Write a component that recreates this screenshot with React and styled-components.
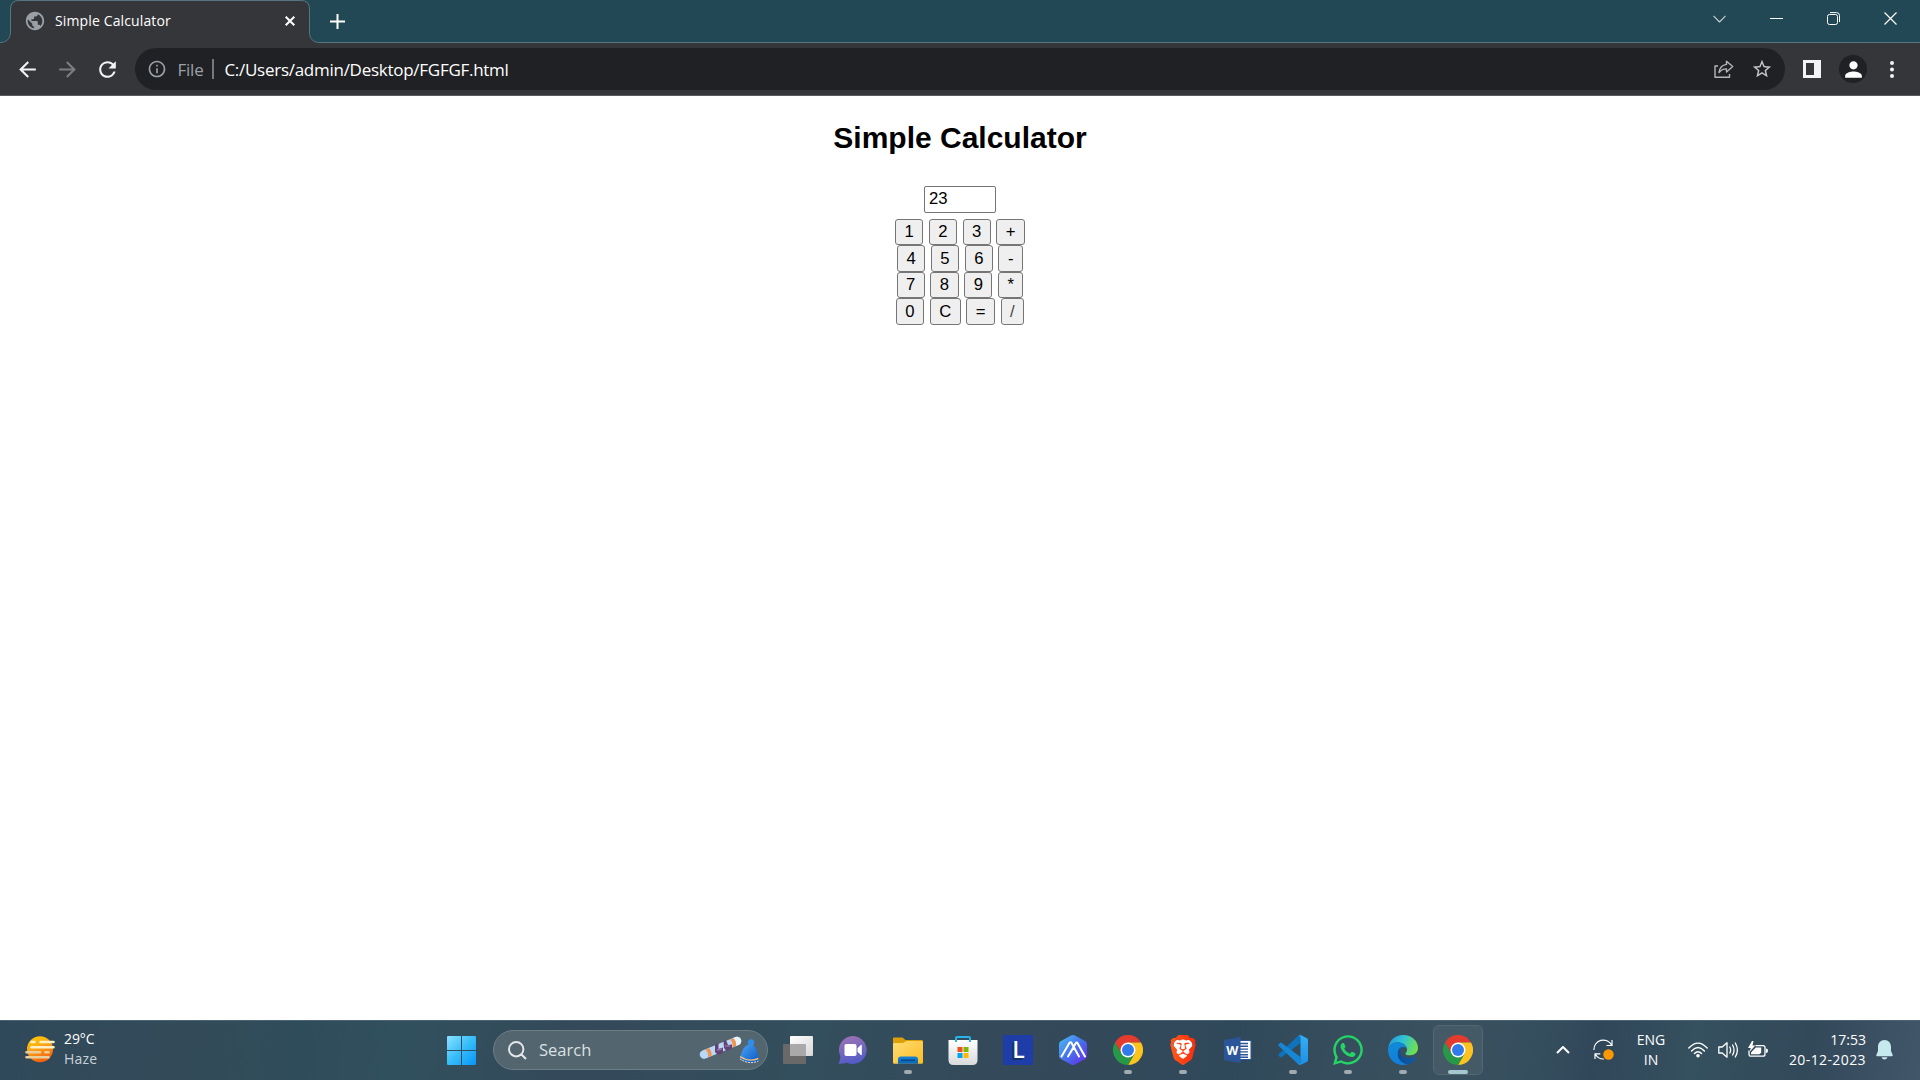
import React from "react";
import styled, { createGlobalStyle } from "styled-components";
import { MdPublic, MdArrowBack, MdArrowForward, MdRefresh, MdInfoOutline, MdStarBorder, MdPerson } from "react-icons/md";
import { FaWhatsapp } from "react-icons/fa";
import { SiBrave } from "react-icons/si";

const Global = createGlobalStyle`
  * { box-sizing: border-box; }
  body { margin: 0; background: #fff; overflow: hidden; }
  svg { display: block; flex: none; }
`;

const ui = `"Open Sans", "Noto Sans", sans-serif`;

const Screen = styled.div`
  width: 1920px;
  height: 1080px;
  display: flex;
  flex-direction: column;
  background: #fff;
  font-family: ${ui};
`;

/* ---------- browser ---------- */
const TabStrip = styled.header`
  height: 43px;
  flex: none;
  display: flex;
  background: #224855;
  box-shadow: inset 0 -1px #557680;
`;

const TabShape = styled.div`
  position: relative;
  width: 320px;
  height: 43px;
  flex: none;
  > svg { position: absolute; left: 0; top: 0; }
`;

const TabContent = styled.div`
  position: relative;
  height: 42px;
  display: flex;
  align-items: center;
  padding: 0 25px 0 24px;
  color: #f1f3f4;
`;

const Label = styled.span`
  font-size: ${(p) => p.$size || 14}px;
  letter-spacing: ${(p) => p.$track || 0}px;
  color: ${(p) => p.$color || "#fff"};
  line-height: 20px;
  white-space: nowrap;
`;

const TabTitle = styled(Label)`
  margin-left: 9px;
  flex: 1;
`;

const NewTab = styled.div`
  width: 74px;
  padding: 14px 0 0 10px;
`;

const WindowControls = styled.div`
  margin-left: auto;
  display: flex;
  height: 37px;
  align-items: center;
  padding-right: 1px;
`;

const ControlSlot = styled.div`
  width: 57px;
  display: flex;
  justify-content: center;
`;

const Toolbar = styled.div`
  height: 53px;
  flex: none;
  display: flex;
  align-items: center;
  background: #35363a;
  border-bottom: 1px solid #5a5b5f;
  padding: 0 0 0 15px;
`;

const NavIcon = styled.div`
  width: 25px;
  flex: none;
  margin-right: ${(p) => p.$gap}px;
  color: ${(p) => (p.$dim ? "#7d7e81" : "#f1f3f4")};
`;

const Omnibox = styled.div`
  width: 1650px;
  height: 42px;
  flex: none;
  border-radius: 21px;
  background: #202124;
  display: flex;
  align-items: center;
  padding: 0 12px 0 12.4px;
  color: #9aa0a6;
`;

const UrlText = styled(Label)`
  padding-top: 1px;
`;

const Scheme = styled(UrlText)`
  width: 27px;
  margin-left: 10px;
`;

const Divider = styled.i`
  width: 2px;
  height: 20px;
  margin: 0 10px 0 8px;
  background: #75787c;
`;

const OmniActions = styled.div`
  margin-left: auto;
  display: flex;
  align-items: center;
  gap: 17px;
  color: #c4c7c9;
`;

const ToolbarEnd = styled.div`
  display: flex;
  align-items: center;
  padding-left: 18px;
`;

const Avatar = styled.div`
  width: 28px;
  height: 28px;
  margin: 0 23px 0 18px;
  border-radius: 50%;
  background: #202124;
  color: #fff;
  display: flex;
  align-items: center;
  justify-content: center;
`;

/* ---------- page ---------- */
const Page = styled.main`
  flex: 1;
  display: flex;
  flex-direction: column;
  align-items: center;
  font-family: "Liberation Sans", Arial, sans-serif;
  color: #000;
`;

const Title = styled.h2`
  margin: 25px 0 31px;
  font-size: 30px;
  line-height: 34px;
`;

const Display = styled.input`
  width: 72px;
  height: 27px;
  margin: 0 0 6px;
  padding: 0 4px 2px;
  border: 1px solid #767676;
  border-radius: 2px;
  outline: none;
  font: 16.667px "Liberation Sans", Arial, sans-serif;
  color: #000;
`;

const KeyRow = styled.div`
  display: flex;
  gap: 5.56px;
  height: ${(p) => (p.$tall ? 27 : 26)}px;
  > button { padding-bottom: ${(p) => (p.$tall ? 0 : 1)}px; }
`;

const Key = styled.button`
  height: 100%;
  padding: 0 8.5px;
  border: 1px solid #767676;
  border-radius: 3px;
  background: #efefef;
  font: 16.667px "Liberation Sans", Arial, sans-serif;
  color: ${(p) => (p.$faded ? "#444" : "#000")};
`;

/* ---------- taskbar ---------- */
const Taskbar = styled.footer`
  height: 60px;
  flex: none;
  display: flex;
  align-items: center;
  border-top: 1px solid #4b6470;
  padding-bottom: 1px;
  background: linear-gradient(100deg, #30495a 0%, #334b59 10%, #2f4c5a 16%, #31505e 21%, #34495a 30%, #334e5c 42%, #34495a 53%, #30495a 64%, #3a515f 75%, #354e5d 80%, #30475a 83%, #35505f 88%, #32495a 94%, #42566a 100%);
`;

const Weather = styled.div`
  width: 446px;
  flex: none;
  display: flex;
  align-items: center;
  padding: 0 0 2px 25px;
  gap: 9px;
`;

const Stack = styled.div`
  display: flex;
  flex-direction: column;
  align-items: ${(p) => p.$align || "flex-start"};
`;

const SearchBox = styled.div`
  width: 275px;
  height: 40px;
  flex: none;
  margin: 0 2px 0 17px;
  padding: 0 7px 0 14px;
  border: 1px solid #6b7e87;
  border-radius: 20px;
  background: #53656f;
  display: flex;
  align-items: center;
  gap: 12px;
  > :last-child { margin-left: auto; }
`;

const AppSlot = styled.div`
  position: relative;
  width: 55px;
  height: 60px;
  flex: none;
  display: flex;
  align-items: center;
  justify-content: center;
`;

const ActiveTile = styled.div`
  width: 50px;
  height: 50px;
  border: 1px solid #536872;
  border-radius: 6px;
  background: #455a67;
  display: flex;
  align-items: center;
  justify-content: center;
`;

const RunMark = styled.i`
  position: absolute;
  bottom: 6px;
  left: 50%;
  width: ${(p) => (p.$active ? 20 : 8)}px;
  height: 4px;
  transform: translateX(-50%);
  border-radius: 2px;
  background: ${(p) => (p.$active ? "#a5c8d0" : "#a0abb2")};
`;

const Tray = styled.div`
  margin-left: auto;
  display: flex;
  align-items: center;
  padding: 0 27px 1px 0;
`;

const TrayItem = styled.div`
  flex: none;
  margin-right: ${(p) => p.$gap || 0}px;
  width: ${(p) => (p.$w ? `${p.$w}px` : "auto")};
`;

/* ---------- drawings ---------- */
const TabOutline = () => (
  <svg width="320" height="43" viewBox="0 0 320 43">
    <path d="M0 43V42.5C6 42.5 10.5 39 10.5 32V9Q10.5.5 19 .5H301Q309.5 .5 309.5 9V32C309.5 39 313 42.5 320 42.5V43Z" fill="#35363a" />
    <path d="M0 42.5C6 42.5 10.5 39 10.5 32V9Q10.5.5 19 .5H301Q309.5 .5 309.5 9V32C309.5 39 313 42.5 320 42.5" fill="none" stroke="#557680" />
  </svg>
);

const Line = ({ w, h, d, sw = 1.2, color = "#fff", cap = "butt" }) => (
  <svg width={w} height={h} viewBox={`0 0 ${w} ${h}`} fill="none" stroke={color} strokeWidth={sw} strokeLinecap={cap} strokeLinejoin="round">
    <path d={d} />
  </svg>
);

const SidePanel = () => (
  <svg width="18" height="18" viewBox="0 0 18 18">
    <path d="M0 0H18V18H0ZM3 3V15H11V3Z" fill="#f1f3f4" fillRule="evenodd" />
  </svg>
);

const MenuDots = () => (
  <svg width="4" height="17" viewBox="0 0 4 17" fill="#f1f3f4">
    <circle cx="2" cy="2" r="2" /><circle cx="2" cy="8.5" r="2" /><circle cx="2" cy="15" r="2" />
  </svg>
);

const Haze = () => (
  <svg width="30" height="27" viewBox="0 0 30 27">
    <defs>
      <linearGradient id="sun" x1="0" y1="0" x2=".4" y2="1"><stop stopColor="#ffd000" /><stop offset=".5" stopColor="#fba715" /><stop offset="1" stopColor="#f4640d" /></linearGradient>
    </defs>
    <circle cx="15" cy="13.3" r="13" fill="url(#sun)" />
    <g stroke="#fdf0c4" strokeWidth="2.6" strokeLinecap="round">
      <path d="M6.5 6H9.5M15.5 6H28.5M6.5 11.2H28.5" />
      <path d="M1.5 16.3H15M20.5 16.3H23.5M1.5 21.3H23.5" stroke="#e8cf9c" />
    </g>
  </svg>
);

const Windows = () => (
  <svg width="30" height="30" viewBox="0 0 30 30">
    <defs>
      <linearGradient id="win" x1="0" y1="0" x2="1" y2="1"><stop stopColor="#8be2ff" /><stop offset=".5" stopColor="#36bdf9" /><stop offset="1" stopColor="#0795f7" /></linearGradient>
    </defs>
    <path transform="translate(0 1)" d="M2 0H15V14H1V1Q1 0 2 0ZM16 0H29Q30 0 30 1V14H16ZM1 15H15V29H2Q1 29 1 28ZM16 15H30V28Q30 29 29 29H16Z" fill="url(#win)" />
  </svg>
);

const Snow = () => (
  <svg width="62" height="28" viewBox="0 0 62 28">
    <defs>
      <linearGradient id="hat" x1="0" y1="0" x2="1" y2="1"><stop stopColor="#4aa5f5" /><stop offset="1" stopColor="#0a57c3" /></linearGradient>
    </defs>
    <path d="M6 18.5L39 5" stroke="#b9d7f6" strokeWidth="8.5" strokeLinecap="round" />
    <path d="M37.5 5.6L39 5" stroke="#e7f3ff" strokeWidth="8.5" strokeLinecap="round" />
    <path d="M7.5 13.4Q10.5 16 10 21.3L13.5 19.8Q14 15.4 11 12ZM32 3.5Q35 6.5 34.6 11.4L38 10Q38.8 5.5 35.5 2.2Z" fill="#f0944f" />
    <path d="M17 8.5L20.5 7V13L25 11.5V17L20 19L17 16ZM25.5 5L28 4L30 9L34 8.5V12.5L28.5 15L26 12Z" fill="#654275" />
    <path d="M19 14L24 13M27 10L32 10" stroke="#9273ac" strokeWidth="1.5" />
    <circle cx="53" cy="6.5" r="3.2" fill="#2e8eea" />
    <path d="M42 23C43 14 47 8.5 52.5 8.5C57.5 8.5 60 15 60.5 25Q51 29 42 23Z" fill="url(#hat)" />
    <path d="M42 20.5Q51 26.5 60.3 22.5" stroke="#f5bd76" strokeWidth="1.4" fill="none" />
    <path d="M41.8 23Q51 29 60.4 25" stroke="#efe3cf" strokeWidth="1" fill="none" strokeDasharray="2 1" />
  </svg>
);

const TaskView = () => (
  <svg width="30" height="28" viewBox="0 0 30 28">
    <defs><linearGradient id="tv" x1="0" y1="0" x2="1" y2="1"><stop stopColor="#fff" /><stop offset="1" stopColor="#d7d7d7" /></linearGradient></defs>
    <rect x="0" y="8" width="23" height="20" rx="1" fill="#696969" />
    <rect x="7" y="0" width="23" height="20" rx="1" fill="url(#tv)" />
    <path d="M7 8H22Q23 8 23 9V20H8Q7 20 7 19Z" fill="#a9a9a9" />
  </svg>
);

const Chat = () => (
  <svg width="30" height="30" viewBox="0 0 30 30">
    <defs><linearGradient id="chat" x1=".3" y1="0" x2=".6" y2="1"><stop stopColor="#9c72b6" /><stop offset=".5" stopColor="#7568bc" /><stop offset="1" stopColor="#5059c9" /></linearGradient></defs>
    <path d="M15 1A14 14 0 1 1 9 27.8Q5 29 1.3 28.8Q.3 28.5 1 27.5Q2.5 25 2.3 21A14 14 0 0 1 15 1Z" fill="url(#chat)" />
    <rect x="6.5" y="9" width="12" height="12" rx="1.8" fill="#fff" />
    <path d="M19.5 13.2L22.8 10Q23.8 9.5 23.8 10.6V19.4Q23.8 20.5 22.8 20L19.5 16.8Z" fill="#fff" />
  </svg>
);

const Folder = () => (
  <svg width="30" height="27" viewBox="0 0 30 27">
    <defs>
      <linearGradient id="fo" x1="0" y1="0" x2="1" y2="1"><stop stopColor="#ffdc75" /><stop offset="1" stopColor="#fcbd22" /></linearGradient>
      <linearGradient id="fb" x1="0" y1="0" x2="0" y2="1"><stop stopColor="#1684d8" /><stop offset="1" stopColor="#0863b1" /></linearGradient>
    </defs>
    <path d="M0 1.5Q0 .5 1 .5H9.5L12.5 3H29Q30 3 30 4.5V10H0Z" fill="#dea006" />
    <path d="M0 7Q0 6 1 6H10L13.5 4H28.5Q30 4 30 5.5V25.5Q30 26.8 28.7 26.8H1.3Q0 26.8 0 25.5Z" fill="url(#fo)" />
    <path d="M5 26.8V22.5Q5 19.5 8 19.5H22Q25 19.5 25 22.5V26.8Z" fill="url(#fb)" />
    <path d="M8 23.2H22" stroke="#07427d" strokeWidth="1.3" />
  </svg>
);

const Store = () => (
  <svg width="30" height="30" viewBox="0 0 30 30">
    <defs><linearGradient id="st" x1="0" y1="0" x2="0" y2="1"><stop stopColor="#fff" /><stop offset="1" stopColor="#d9dadb" /></linearGradient></defs>
    <path d="M8 7V3Q8 2 9 2H21Q22 2 22 3V7" fill="none" stroke="#28b4e8" strokeWidth="2" />
    <path d="M.5 5H29.5V25Q29.5 30 24.5 30H5.5Q.5 30 .5 25Z" fill="url(#st)" />
    <path d="M8 5V7M22 5V7" stroke="#28b4e8" strokeWidth="2" />
    <path d="M9.5 12H14.5V17H9.5Z" fill="#f25022" /><path d="M15.5 12H20.5V17H15.5Z" fill="#7fba00" />
    <path d="M9.5 18H14.5V23H9.5Z" fill="#00a4ef" /><path d="M15.5 18H20.5V23H15.5Z" fill="#ffb900" />
  </svg>
);

const LBadge = styled.div`
  width: 30px;
  height: 30px;
  padding-left: 2px;
  background: #1f3da9;
  color: #fff;
  font: 600 23px/28px "Open Sans", sans-serif;
  text-align: center;
  text-shadow: -1px 1px #123063, -2px 2px #123063;
`;

const Hexagon = () => (
  <svg width="30" height="30" viewBox="0 0 30 30">
    <defs><linearGradient id="hx" x1="0" y1="0" x2="1" y2="1"><stop stopColor="#4ac1f0" /><stop offset=".5" stopColor="#4672ed" /><stop offset="1" stopColor="#6b23ea" /></linearGradient></defs>
    <path d="M15 0Q16 0 17 .6L27 6Q29 7.2 29 9V21Q29 22.8 27.2 24L17 29.4Q15 30.4 13 29.4L2.8 24Q1 22.8 1 21V9Q1 7.2 3 6L13 .6Q14 0 15 0Z" fill="url(#hx)" />
    <path d="M3.5 21.5L11.5 7.8Q12.4 6.6 13.4 7.8L21 21.5M10 21.5L17.8 8.2Q18.7 7 19.6 8.2L27 21.5M15.2 13L10 21.5" fill="none" stroke="#fff" strokeWidth="2" strokeLinecap="round" strokeLinejoin="round" />
  </svg>
);

const Chrome = () => (
  <svg width="30" height="30" viewBox="0 0 48 48">
    <path d="M24 12H44.8A24 24 0 0 0 3.2 12L13.6 30Z" fill="#e33b2e" />
    <path d="M34.4 30L24 48A24 24 0 0 0 44.8 12H24Z" fill="#fcc31e" />
    <path d="M13.6 30L3.2 12A24 24 0 0 0 24 48L34.4 30Z" fill="#279847" />
    <circle cx="24" cy="24" r="12" fill="#fff" />
    <circle cx="24" cy="24" r="9.6" fill="#2f7bea" />
  </svg>
);

const BraveMark = styled.div`
  display: grid;
  place-items: center;
  > * { grid-area: 1 / 1; }
`;

const BraveShield = styled(SiBrave)`
  fill: url(#br);
`;

const Brave = () => (
  <BraveMark>
    <svg width="30" height="30" viewBox="0 0 30 30">
      <defs><linearGradient id="br" x1="0" y1="0" x2="1" y2="0"><stop stopColor="#ff5a1f" /><stop offset="1" stopColor="#fb2b0b" /></linearGradient></defs>
      <path d="M6 6L12 4H18L24 6L25 16L21 23L15 27L9 23L5 16Z" fill="#fff" />
    </svg>
    <BraveShield size={30} />
  </BraveMark>
);

const Word = () => (
  <svg width="28" height="26" viewBox="0 0 28 26">
    <rect x="14" y="3.5" width="13" height="19" fill="#fff" stroke="#2a5699" />
    <path d="M16 6.5H24M16 9.3H24M16 12.1H24M16 14.9H24M16 17.7H24M16 20.2H24" stroke="#2a5699" strokeWidth="1.4" />
    <path d="M0 3L16.5 0V26L0 23Z" fill="#2a5699" />
    <text x="8.2" y="18" textAnchor="middle" fontFamily="Open Sans, sans-serif" fontWeight="700" fontSize="12.5" fill="#fff">W</text>
  </svg>
);

const Code = () => (
  <svg width="30" height="30" viewBox="0 0 30 30">
    <defs><linearGradient id="vs" x1="0" y1="0" x2="0" y2="1"><stop stopColor="#35aef5" /><stop offset="1" stopColor="#1c91e6" /></linearGradient></defs>
    <path d="M.6 19.2Q0 20 .7 20.7L2.3 22.2Q3 22.7 3.8 22.1L22.5 8V0Q21 0 20.2 .8Z" fill="#0f72bd" />
    <path d="M.6 10.8Q0 10 .7 9.3L2.3 7.8Q3 7.3 3.8 7.9L22.5 22V30Q21 30 20.2 29.2Z" fill="#1787d3" />
    <path d="M20.5 29Q21.5 30 23 29.7L29 26.8Q30 26.3 30 25.2V4.8Q30 3.7 29 3.2L23 .3Q21.5 0 20.5 1Q22.5 .5 22.5 2.7V27.3Q22.5 29.5 20.5 29Z" fill="url(#vs)" />
  </svg>
);

const Edge = () => (
  <svg width="30" height="30" viewBox="0 0 30 30">
    <defs>
      <linearGradient id="e1" x1="0" y1=".2" x2="1" y2=".5"><stop stopColor="#2297dd" /><stop offset=".45" stopColor="#2fc2d8" /><stop offset="1" stopColor="#72e04c" /></linearGradient>
      <linearGradient id="e2" x1="0" y1="0" x2=".3" y2="1"><stop stopColor="#118bd6" /><stop offset="1" stopColor="#1080dc" /></linearGradient>
      <linearGradient id="e3" x1="0" y1="0" x2="1" y2="0"><stop stopColor="#104d92" /><stop offset="1" stopColor="#0d5bab" /></linearGradient>
    </defs>
    <path d="M.2 13C1.4 5 7.5 0 15 0C24 0 30 6.2 30 12.8C30 17.5 26.5 20.3 22.3 20.3C18.7 20.3 16.8 19.3 17.6 18.2C19 16.5 19.3 15 18.8 13.2C17.8 9.5 13.5 7.2 9.3 7.2C5.5 7.2 2 9.3 .2 13Z" fill="url(#e1)" />
    <path d="M0 15C0 10 4.2 7.2 9.3 7.2C14 7.2 18 9.7 18.8 13.2C16 10.5 11.3 12.5 10.2 17.5C9.2 22.5 13 28.5 20 29.1C18.5 29.8 16.8 30 15 30C6.5 30 0 23.3 0 15Z" fill="url(#e2)" />
    <path d="M14.5 11.5C12 13 11.7 15.5 12.3 17.8C13.5 22.8 20.5 24.8 27.2 21.9Q28.6 21.5 27.8 23C26 26.5 23.3 28.5 20 29.2C13.5 28.5 8.8 23.5 9.8 17.5C10.3 14.3 12 12.2 14.5 11.5Z" fill="url(#e3)" />
  </svg>
);

const Update = () => (
  <svg width="22" height="22" viewBox="0 0 22 22" fill="none" stroke="#fff" strokeWidth="1.2">
    <path d="M1 11A9.3 9.3 0 0 1 18.5 6M19 1V6.5H13.5M2 20V14.8H7.3M2.5 15.5A9.3 9.3 0 0 0 11 20" />
    <circle cx="15.5" cy="15.5" r="5.2" fill="#ff9800" stroke="none" />
  </svg>
);

const Wifi = () => (
  <svg width="20" height="16" viewBox="0 0 20 16" fill="none" stroke="#fff" strokeWidth="1.4" strokeLinecap="round">
    <path d="M.8 6Q10-3.8 19.2 6M3.6 8.9Q10 2.1 16.4 8.9M6.4 11.6Q10 7.8 13.6 11.6" />
    <circle cx="10" cy="13.8" r="1.8" fill="#fff" stroke="none" />
  </svg>
);

const Speaker = () => (
  <svg width="21" height="18" viewBox="0 0 21 18" fill="none" stroke="#fff" strokeWidth="1.3" strokeLinecap="round" strokeLinejoin="round">
    <path d="M.8 6H4.2L9 1.8V16.2L4.2 12H.8ZM11.8 6Q13.5 9 11.8 12M14.6 4Q17.5 9 14.6 14M17.3 2Q21.5 9 17.3 16" />
  </svg>
);

const Battery = () => (
  <svg width="20" height="17" viewBox="0 0 20 17">
    <path d="M7.5 4.6H15Q17 4.6 17 6.6V13.2Q17 15.2 15 15.2H3Q1 15.2 1 13.2V9.5" fill="none" stroke="#fff" strokeWidth="1.3" />
    <path d="M18 7.5Q20 7.5 20 9.8Q20 12 18 12Z" fill="#fff" />
    <path d="M7.8 6.5H13.2V11.5L11.5 13.3H3V11.5Z" fill="#fff" />
    <path d="M4 0L0 7H2.8L1.5 11L7.2 4.4H4.5L5.5 0Z" fill="#fff" />
  </svg>
);

const Bell = () => (
  <svg width="17" height="20" viewBox="0 0 17 20" fill="#c6e9ed">
    <path d="M8.5 0C4.5 0 2 3 2 6.8V11L.3 15Q0 16.3 1.2 16.3H15.8Q17 16.3 16.7 15L15 11V6.8C15 3 12.5 0 8.5 0ZM5.5 17.3Q6.3 19.5 8.5 19.5Q10.7 19.5 11.5 17.3Z" />
  </svg>
);

const Share = () => (
  <svg width="20" height="18" viewBox="0 0 20 18" fill="none" stroke="#b4b7ba" strokeWidth="1.4" strokeLinejoin="round">
    <path d="M4 6H1V17.2H15.5V14" />
    <path d="M12.5 1.2L18.7 6.5L12.5 12V8.9Q8 8.8 5 12.5Q5.8 5.5 12.5 4.4Z" />
  </svg>
);

const keys = [["1", "2", "3", "+"], ["4", "5", "6", "-"], ["7", "8", "9", "*"], ["0", "C", "=", "/"]];

const apps = [
  { id: "taskview", icon: <TaskView /> },
  { id: "chat", icon: <Chat /> },
  { id: "folder", icon: <Folder />, running: true },
  { id: "store", icon: <Store /> },
  { id: "l", icon: <LBadge>L</LBadge> },
  { id: "hexagon", icon: <Hexagon /> },
  { id: "chrome", icon: <Chrome />, running: true },
  { id: "brave", icon: <Brave />, running: true },
  { id: "word", icon: <Word /> },
  { id: "code", icon: <Code />, running: true },
  { id: "whatsapp", icon: <FaWhatsapp size={34} color="#25d366" />, running: true },
  { id: "edge", icon: <Edge />, running: true },
  { id: "chrome2", icon: <Chrome />, running: true, active: true },
];

export default function App() {
  return (
    <Screen>
      <Global />
      <TabStrip>
        <TabShape>
          <TabOutline />
          <TabContent>
            <MdPublic size={22} color="#9aa0a6" />
            <TabTitle $size={14} $track={0.13}>Simple Calculator</TabTitle>
            <Line w={10} h={10} d="M.7 .7L9.3 9.3M9.3 .7L.7 9.3" sw={2} />
          </TabContent>
        </TabShape>
        <NewTab><Line w={15} h={15} d="M7.5 0V15M0 7.5H15" sw={2} /></NewTab>
        <WindowControls>
          <ControlSlot><Line w={13} h={8} d="M.5 .8L6.5 7L12.5 .8" color="#c5d0d4" sw={1.1} /></ControlSlot>
          <ControlSlot><Line w={13} h={1} d="M0 .5H13" /></ControlSlot>
          <ControlSlot><Line w={13} h={13} d="M2.5 2.5H8.5Q10.5 2.5 10.5 4.5V10.5Q10.5 12.5 8.5 12.5H2.5Q.5 12.5 .5 10.5V4.5Q.5 2.5 2.5 2.5ZM3 .6H9.5Q12.5 .6 12.5 3.5V10" sw={1} /></ControlSlot>
          <ControlSlot><Line w={13} h={13} d="M.5 .5L12.5 12.5M12.5 .5L.5 12.5" /></ControlSlot>
        </WindowControls>
      </TabStrip>
      <Toolbar>
        <NavIcon $gap={15}><MdArrowBack size={25} /></NavIcon>
        <NavIcon $gap={15} $dim><MdArrowForward size={25} /></NavIcon>
        <NavIcon $gap={15}><MdRefresh size={25} /></NavIcon>
        <Omnibox>
          <MdInfoOutline size={20} />
          <Scheme $size={17} $track={-0.2} $color="#9aa0a6">File</Scheme>
          <Divider />
          <UrlText $size={17} $track={-0.27}>C:/Users/admin/Desktop/FGFGF.html</UrlText>
          <OmniActions>
            <Share />
            <MdStarBorder size={22} />
          </OmniActions>
        </Omnibox>
        <ToolbarEnd>
          <SidePanel />
          <Avatar><MdPerson size={25} /></Avatar>
          <MenuDots />
        </ToolbarEnd>
      </Toolbar>
      <Page>
        <Title>Simple Calculator</Title>
        <Display defaultValue="23" />
        {keys.map((row, i) => (
          <KeyRow key={row[0]} $tall={i % 2 === 1}>
            {row.map((k) => <Key key={k} $faded={k === "/"}>{k}</Key>)}
          </KeyRow>
        ))}
      </Page>
      <Taskbar>
        <Weather>
          <Haze />
          <Stack>
            <Label $track={-0.1}>29°C</Label>
            <Label $track={0.2} $color="#c9d1d6">Haze</Label>
          </Stack>
        </Weather>
        <Windows />
        <SearchBox>
          <Line w={19} h={19} d="M8.2 1A7.2 7.2 0 1 0 8.2 15.4A7.2 7.2 0 1 0 8.2 1M13.3 13.3L18 18" sw={2} color="#e3e7e9" />
          <Label $size={16.5} $color="#dbe0e2">Search</Label>
          <Snow />
        </SearchBox>
        {apps.map((a) => (
          <AppSlot key={a.id}>
            {a.active ? <ActiveTile>{a.icon}</ActiveTile> : a.icon}
            {a.running && <RunMark $active={a.active} />}
          </AppSlot>
        ))}
        <Tray>
          <TrayItem $gap={23}><Line w={14} h={9} d="M1 8L7 2L13 8" sw={2} /></TrayItem>
          <TrayItem $gap={21}><Update /></TrayItem>
          <TrayItem $gap={22} $w={30}><Stack $align="center"><Label>ENG</Label><Label>IN</Label></Stack></TrayItem>
          <TrayItem $gap={10}><Wifi /></TrayItem>
          <TrayItem $gap={9}><Speaker /></TrayItem>
          <TrayItem $gap={21}><Battery /></TrayItem>
          <TrayItem $gap={10} $w={77}><Stack $align="flex-end"><Label>17:53</Label><Label $track={0.4}>20-12-2023</Label></Stack></TrayItem>
          <Bell />
        </Tray>
      </Taskbar>
    </Screen>
  );
}
